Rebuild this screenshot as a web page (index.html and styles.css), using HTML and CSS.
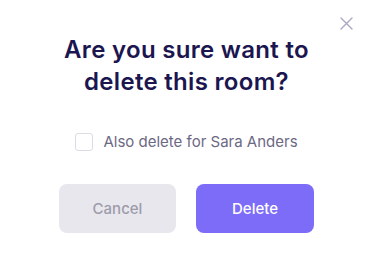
FILE: index.html
```html
<!doctype html>
<html>
    <head>
        <meta charset="utf-8" />
        <title>删除房间</title>
        <link rel="stylesheet" href="styles.css">
    </head>
<body>

    <div id="dialog">
        <span class="close">
            <svg width="13" height="13" viewBox="0 0 13 13"><path d="M1 1L12 12M12 1L1 12" stroke="#a9a7c2" stroke-width="1.4" stroke-linecap="round"/></svg>
        </span>
        <h2 class="title">Are you sure want to<br>delete this room?</h2>
        <label class="check">
            <span class="box"></span>
            <span class="label">Also delete for Sara Anders</span>
        </label>
        <div class="btns">
            <a href="javascript: void(0);" class="btn cancel">Cancel</a>
            <a href="javascript: void(0);" class="btn delete">Delete</a>
        </div>
    </div>

</body>
</html>
```

FILE: styles.css
```css
* {
    margin: 0;
    padding: 0;
    outline: 0;
    border: 0;
}

body {
    background: #fff;
    font-family: Inter, "Open Sans", sans-serif;
}

a {
    text-decoration: none;
}

#dialog {
    position: relative;
    width: 373px;
    height: 261px;
    padding-top: 34px;
    box-sizing: border-box;
    display: flex;
    flex-direction: column;
    align-items: center;
}

.close {
    position: absolute;
    top: 17px;
    right: 20px;
    width: 13px;
    height: 13px;
    cursor: pointer;
}

.close svg {
    display: block;
}

.title {
    font-size: 24px;
    line-height: 32px;
    font-weight: 600;
    color: #1c1650;
    text-align: center;
    letter-spacing: 0.3px;
}

.check {
    display: flex;
    align-items: center;
    gap: 10px;
    margin-top: 34px;
    cursor: pointer;
}

.check .box {
    width: 16px;
    height: 16px;
    border: 1px solid #dcdbe3;
    border-radius: 3px;
}

.check .label {
    font-size: 15px;
    color: #6c6984;
}

.btns {
    display: flex;
    gap: 20px;
    margin-top: 33px;
}

.btn {
    display: block;
    width: 117px;
    height: 49px;
    line-height: 49px;
    border-radius: 8px;
    text-align: center;
    font-size: 15px;
    font-weight: 500;
}

.cancel {
    background-color: #e8e7ed;
    color: #9d9bab;
}

.delete {
    background-color: #7c6cf8;
    color: #fff;
    width: 118px;
}
```
